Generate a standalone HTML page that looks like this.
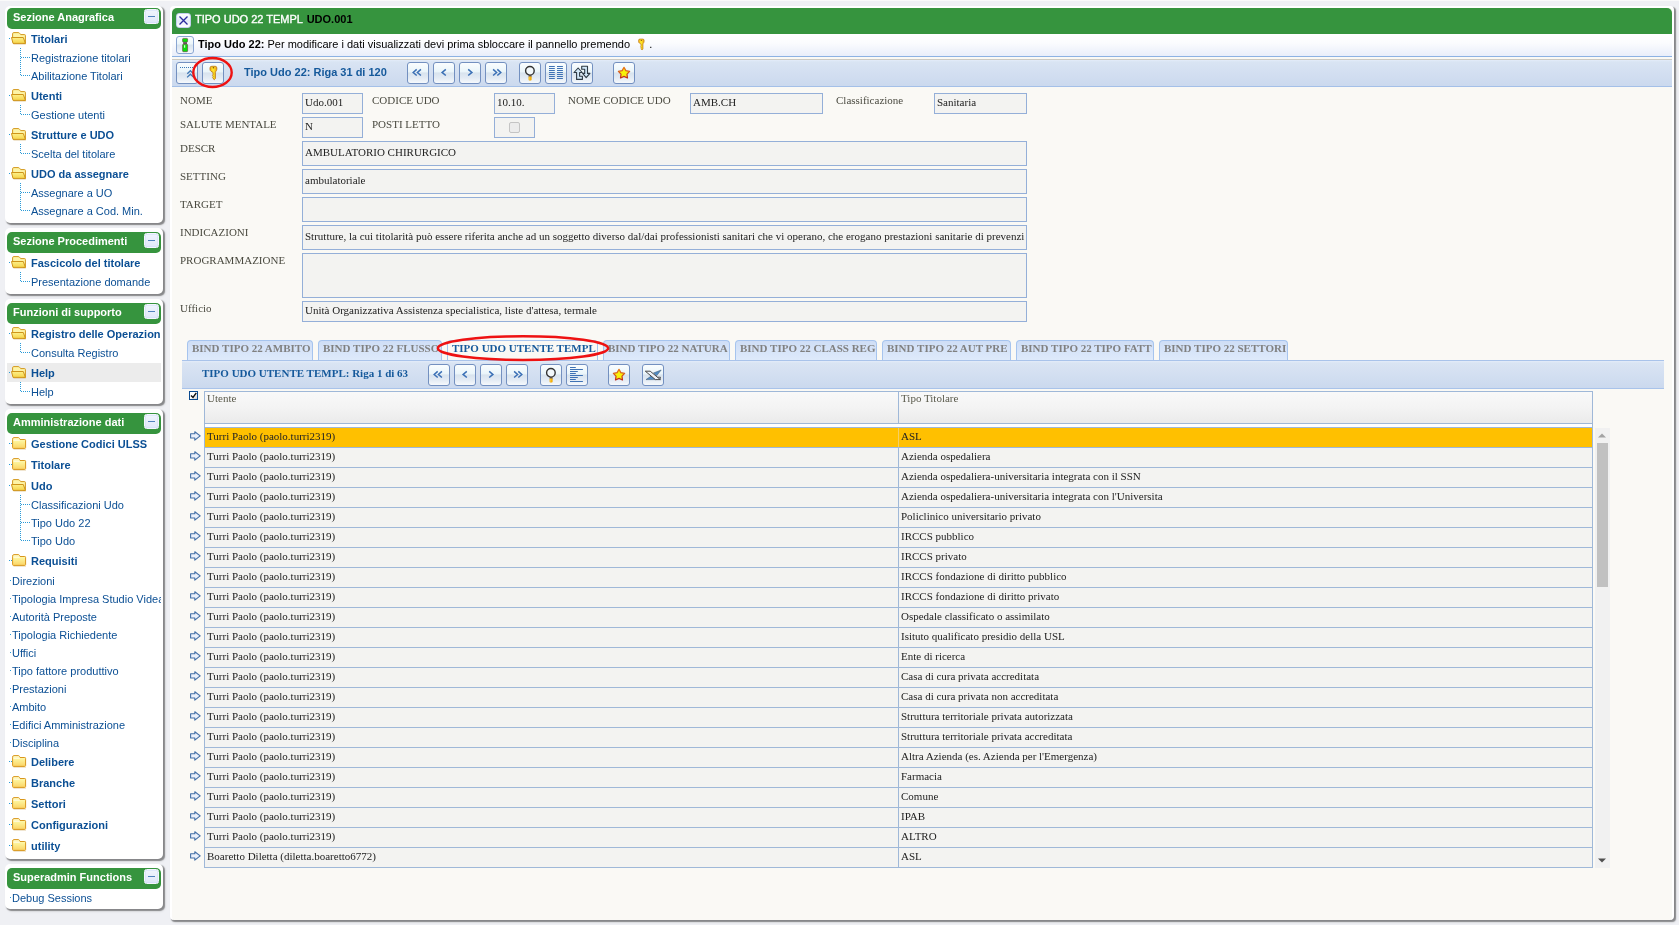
<!DOCTYPE html><html><head><meta charset="utf-8"><title>UI</title><style>
*{box-sizing:border-box;margin:0;padding:0}
html,body{width:1679px;height:925px;overflow:hidden}
body{background:#eff0f4;font-family:"Liberation Sans",sans-serif;font-size:11px;position:relative}
.abs{position:absolute}
.sp{position:absolute;left:5px;width:158px;background:#fff;border-radius:5px;box-shadow:1.500px 1.500px 1px rgba(0,0,0,.36),2px 2px 3px rgba(0,0,0,.14);padding:4px 2px 2px 2px}
.sh{height:21px;background:#36943e;border-radius:5px;color:#fff;font-weight:bold;font-size:11px;line-height:19px;padding-left:6px;position:relative}
.mb{position:absolute;right:2px;top:1px;width:15px;height:15px;border-radius:2.500px;background:linear-gradient(#f0f5fd,#dfe8f9);border:1px solid #f4f6ff;box-shadow:inset 0 0 0 .5px #d0dcfb}
.mb i{position:absolute;left:3px;top:6px;width:7px;height:1px;background:#4f81bd}
.fr{height:21px;position:relative;white-space:nowrap;overflow:hidden}
.fr b{position:absolute;left:24px;top:0;line-height:21px;color:#0b4f94;font-size:11px}
.fr svg{position:absolute;left:4px;top:3px}
.fr svg.c{left:5px}
.lr{height:18px;position:relative;white-space:nowrap}
.lr span{max-width:131px;overflow:hidden}
.lr span{position:absolute;left:24px;top:-1px;line-height:18px;color:#0b4f94;font-size:11px}
.lr.t span{left:5px;top:0;max-width:149px}
.dot{position:absolute;width:1px;height:1px;background:#2b9bd8}
.hl{background:linear-gradient(#ececec,#ececec) no-repeat;background-size:100% 19px}

.mp{position:absolute;left:170px;top:6px;width:1504px;height:914px;background:#faf9f5;border-radius:4px;box-shadow:1.500px 1.500px 1px rgba(0,0,0,.36),2px 2px 3px rgba(0,0,0,.14);border:2px solid #fff;border-bottom-width:0;border-right-width:2px}
.gh{position:absolute;left:172px;top:8px;width:1500px;height:26px;background:#36943e;border-radius:5px 5px 0 0;color:#fff;font-size:11px}
.gh .t{position:absolute;left:23px;top:5px;line-height:13px;white-space:nowrap;-webkit-text-stroke:.35px #fff}
.gh .t b{color:#000;-webkit-text-stroke:0;margin-left:1px}
.cb{position:absolute;left:4px;top:5px;width:15px;height:15px;border-radius:3px;background:linear-gradient(#fff,#e4ebf8 55%,#fff);border:1px solid #c5d0ee}
.ib{position:absolute;left:172px;top:34px;width:1500px;height:23px;background:linear-gradient(#ffffff,#fbfcfe 40%,#e9eefa);border-bottom:1px solid #8db2e3}
.ib .t{position:absolute;left:26px;top:4px;line-height:13px;font-size:11px;color:#000;white-space:nowrap}
.sep{position:absolute;left:172px;top:59px;width:1500px;height:1px;background:#cbcac4}
.tb{position:absolute;left:172px;top:60px;width:1500px;height:27px;background:linear-gradient(#e3ecf9,#d9e4f3 8%,#d3dff1 50%,#cbd9ee);border-bottom:1px solid #a4c0e8}
.btn{position:absolute;width:22px;height:22px;border:1px solid #7390c0;border-radius:3px;background:linear-gradient(#fafdfe,#eaf5fa 44%,#d8e3ee 50%,#e3ebf4 75%,#f6f9fc)}
.btn svg{position:absolute;left:0;top:0}
.tt{position:absolute;font-weight:bold;color:#15599b;font-size:11px;line-height:13px;white-space:nowrap}
.lb{position:absolute;font-family:"Liberation Serif",serif;font-size:11px;line-height:13px;color:#4a4a40;white-space:nowrap}
.in{position:absolute;font-family:"Liberation Serif",serif;font-size:11px;color:#222;background:#f3f3f1;border:1px solid #94afd8;white-space:nowrap;overflow:hidden;padding-left:2px}

.tab{position:absolute;top:340px;height:20px;background:linear-gradient(#cfdef6,#deeafb);border:1px solid #a6c4ee;border-bottom:none;border-radius:4px 4px 0 0;font-family:"Liberation Serif",serif;font-weight:bold;font-size:11px;color:#808080;line-height:13px;padding:1px 0 0 4px;white-space:nowrap;overflow:hidden}
.tab.on{background:#faf9f5;color:#15599b;height:21px}
.stb{position:absolute;left:182px;top:360px;width:1482px;height:29px;background:linear-gradient(#e3ecf9,#d9e4f3 8%,#d3dff1 50%,#cbd9ee);border-top:1px solid #a9c3ea;border-bottom:1px solid #a9c3ea}
.stt{position:absolute;left:202px;top:367px;font-family:"Liberation Serif",serif;font-weight:bold;font-size:11px;line-height:13px;color:#15599b;white-space:nowrap}
.th{position:absolute;top:391px;height:33px;border:1px solid #9fb8d8;background:linear-gradient(#f9f9f9,#f4f4f4 45%,#ebebeb);font-family:"Liberation Serif",serif;font-size:11px;line-height:13px;color:#5a5a4c;padding:0 0 0 2px}
.gr{position:absolute;left:204px;width:1389px;height:20px;border-left:1px solid #9fb8d8;border-right:1px solid #9fb8d8;border-bottom:1px solid #9fb8d8;background:#f3f3f1;font-family:"Liberation Serif",serif;font-size:11px;line-height:13px;color:#222}
.gr.sel{background:#ffc000}
.gr span{position:absolute;top:2px;white-space:nowrap}
.gr i{position:absolute;left:693px;top:0;width:1px;height:19px;background:#9fb8d8}
.gr.sel i{background:#f6cf63}
.arw{position:absolute;left:189.500px}
</style></head><body><div id="root" style="position:absolute;left:0;top:0;width:1679px;height:925px;will-change:transform"><div class="abs" style="left:0;top:0;width:1679px;height:1px;background:#fafafa"></div>
<div class="sp" style="top:6px;padding-top:2px"><div class="sh">Sezione Anagrafica<span class="mb"><i></i></span></div><div class="fr"><i class="dot" style="left:2px;top:9px"></i><svg width="16" height="13" viewBox="0 0 16 13"><defs><linearGradient id="fo" x1="0" y1="0" x2="0" y2="1"><stop offset="0" stop-color="#fdf08a"/><stop offset="1" stop-color="#f6d44a"/></linearGradient></defs><path d="M1.6 6V1.800Q1.600 .6 2.800 .6H7.200Q8.300 .6 8.900 1.600L9.700 2.600H13.600Q14.400 2.600 14.400 3.400V11.400H12" fill="#fdf4a6" stroke="#d3981c"/><path d="M.5 5.500H12.300L14.400 11.400H2Z" fill="url(#fo)" stroke="#cf941a" stroke-linejoin="round"/><path d="M2.500 12.300H14.800" stroke="#c9a25a" stroke-width=".6" opacity=".6"/></svg><b>Titolari</b></div><div class="lr"><i class="dot" style="left:13px;top:-2px"></i><i class="dot" style="left:13px;top:0px"></i><i class="dot" style="left:13px;top:2px"></i><i class="dot" style="left:13px;top:4px"></i><i class="dot" style="left:13px;top:6px"></i><i class="dot" style="left:13px;top:8px"></i><i class="dot" style="left:13px;top:10px"></i><i class="dot" style="left:13px;top:12px"></i><i class="dot" style="left:13px;top:14px"></i><i class="dot" style="left:13px;top:16px"></i><i class="dot" style="left:14px;top:7px"></i><i class="dot" style="left:16px;top:7px"></i><i class="dot" style="left:18px;top:7px"></i><i class="dot" style="left:20px;top:7px"></i><i class="dot" style="left:22px;top:7px"></i><span>Registrazione titolari</span></div><div class="lr"><i class="dot" style="left:13px;top:-2px"></i><i class="dot" style="left:13px;top:0px"></i><i class="dot" style="left:13px;top:2px"></i><i class="dot" style="left:13px;top:4px"></i><i class="dot" style="left:13px;top:6px"></i><i class="dot" style="left:14px;top:7px"></i><i class="dot" style="left:16px;top:7px"></i><i class="dot" style="left:18px;top:7px"></i><i class="dot" style="left:20px;top:7px"></i><i class="dot" style="left:22px;top:7px"></i><span>Abilitazione Titolari</span></div><div class="fr"><i class="dot" style="left:2px;top:9px"></i><svg width="16" height="13" viewBox="0 0 16 13"><defs><linearGradient id="fo" x1="0" y1="0" x2="0" y2="1"><stop offset="0" stop-color="#fdf08a"/><stop offset="1" stop-color="#f6d44a"/></linearGradient></defs><path d="M1.6 6V1.800Q1.600 .6 2.800 .6H7.200Q8.300 .6 8.900 1.600L9.700 2.600H13.600Q14.400 2.600 14.400 3.400V11.400H12" fill="#fdf4a6" stroke="#d3981c"/><path d="M.5 5.500H12.300L14.400 11.400H2Z" fill="url(#fo)" stroke="#cf941a" stroke-linejoin="round"/><path d="M2.500 12.300H14.800" stroke="#c9a25a" stroke-width=".6" opacity=".6"/></svg><b>Utenti</b></div><div class="lr"><i class="dot" style="left:13px;top:-2px"></i><i class="dot" style="left:13px;top:0px"></i><i class="dot" style="left:13px;top:2px"></i><i class="dot" style="left:13px;top:4px"></i><i class="dot" style="left:13px;top:6px"></i><i class="dot" style="left:14px;top:7px"></i><i class="dot" style="left:16px;top:7px"></i><i class="dot" style="left:18px;top:7px"></i><i class="dot" style="left:20px;top:7px"></i><i class="dot" style="left:22px;top:7px"></i><span>Gestione utenti</span></div><div class="fr"><i class="dot" style="left:2px;top:9px"></i><svg width="16" height="13" viewBox="0 0 16 13"><defs><linearGradient id="fo" x1="0" y1="0" x2="0" y2="1"><stop offset="0" stop-color="#fdf08a"/><stop offset="1" stop-color="#f6d44a"/></linearGradient></defs><path d="M1.6 6V1.800Q1.600 .6 2.800 .6H7.200Q8.300 .6 8.900 1.600L9.700 2.600H13.600Q14.400 2.600 14.400 3.400V11.400H12" fill="#fdf4a6" stroke="#d3981c"/><path d="M.5 5.500H12.300L14.400 11.400H2Z" fill="url(#fo)" stroke="#cf941a" stroke-linejoin="round"/><path d="M2.500 12.300H14.800" stroke="#c9a25a" stroke-width=".6" opacity=".6"/></svg><b>Strutture e UDO</b></div><div class="lr"><i class="dot" style="left:13px;top:-2px"></i><i class="dot" style="left:13px;top:0px"></i><i class="dot" style="left:13px;top:2px"></i><i class="dot" style="left:13px;top:4px"></i><i class="dot" style="left:13px;top:6px"></i><i class="dot" style="left:14px;top:7px"></i><i class="dot" style="left:16px;top:7px"></i><i class="dot" style="left:18px;top:7px"></i><i class="dot" style="left:20px;top:7px"></i><i class="dot" style="left:22px;top:7px"></i><span>Scelta del titolare</span></div><div class="fr"><i class="dot" style="left:2px;top:9px"></i><svg width="16" height="13" viewBox="0 0 16 13"><defs><linearGradient id="fo" x1="0" y1="0" x2="0" y2="1"><stop offset="0" stop-color="#fdf08a"/><stop offset="1" stop-color="#f6d44a"/></linearGradient></defs><path d="M1.6 6V1.800Q1.600 .6 2.800 .6H7.200Q8.300 .6 8.900 1.600L9.700 2.600H13.600Q14.400 2.600 14.400 3.400V11.400H12" fill="#fdf4a6" stroke="#d3981c"/><path d="M.5 5.500H12.300L14.400 11.400H2Z" fill="url(#fo)" stroke="#cf941a" stroke-linejoin="round"/><path d="M2.500 12.300H14.800" stroke="#c9a25a" stroke-width=".6" opacity=".6"/></svg><b>UDO da assegnare</b></div><div class="lr"><i class="dot" style="left:13px;top:-2px"></i><i class="dot" style="left:13px;top:0px"></i><i class="dot" style="left:13px;top:2px"></i><i class="dot" style="left:13px;top:4px"></i><i class="dot" style="left:13px;top:6px"></i><i class="dot" style="left:13px;top:8px"></i><i class="dot" style="left:13px;top:10px"></i><i class="dot" style="left:13px;top:12px"></i><i class="dot" style="left:13px;top:14px"></i><i class="dot" style="left:13px;top:16px"></i><i class="dot" style="left:14px;top:7px"></i><i class="dot" style="left:16px;top:7px"></i><i class="dot" style="left:18px;top:7px"></i><i class="dot" style="left:20px;top:7px"></i><i class="dot" style="left:22px;top:7px"></i><span>Assegnare a UO</span></div><div class="lr"><i class="dot" style="left:13px;top:-2px"></i><i class="dot" style="left:13px;top:0px"></i><i class="dot" style="left:13px;top:2px"></i><i class="dot" style="left:13px;top:4px"></i><i class="dot" style="left:13px;top:6px"></i><i class="dot" style="left:14px;top:7px"></i><i class="dot" style="left:16px;top:7px"></i><i class="dot" style="left:18px;top:7px"></i><i class="dot" style="left:20px;top:7px"></i><i class="dot" style="left:22px;top:7px"></i><span>Assegnare a Cod. Min.</span></div></div>
<div class="sp" style="top:228px"><div class="sh">Sezione Procedimenti<span class="mb"><i></i></span></div><div class="fr"><i class="dot" style="left:2px;top:9px"></i><svg width="16" height="13" viewBox="0 0 16 13"><defs><linearGradient id="fo" x1="0" y1="0" x2="0" y2="1"><stop offset="0" stop-color="#fdf08a"/><stop offset="1" stop-color="#f6d44a"/></linearGradient></defs><path d="M1.6 6V1.800Q1.600 .6 2.800 .6H7.200Q8.300 .6 8.900 1.600L9.700 2.600H13.600Q14.400 2.600 14.400 3.400V11.400H12" fill="#fdf4a6" stroke="#d3981c"/><path d="M.5 5.500H12.300L14.400 11.400H2Z" fill="url(#fo)" stroke="#cf941a" stroke-linejoin="round"/><path d="M2.500 12.300H14.800" stroke="#c9a25a" stroke-width=".6" opacity=".6"/></svg><b>Fascicolo del titolare</b></div><div class="lr"><i class="dot" style="left:13px;top:-2px"></i><i class="dot" style="left:13px;top:0px"></i><i class="dot" style="left:13px;top:2px"></i><i class="dot" style="left:13px;top:4px"></i><i class="dot" style="left:13px;top:6px"></i><i class="dot" style="left:14px;top:7px"></i><i class="dot" style="left:16px;top:7px"></i><i class="dot" style="left:18px;top:7px"></i><i class="dot" style="left:20px;top:7px"></i><i class="dot" style="left:22px;top:7px"></i><span>Presentazione domande</span></div></div>
<div class="sp" style="top:299px"><div class="sh">Funzioni di supporto<span class="mb"><i></i></span></div><div class="fr"><i class="dot" style="left:2px;top:9px"></i><svg width="16" height="13" viewBox="0 0 16 13"><defs><linearGradient id="fo" x1="0" y1="0" x2="0" y2="1"><stop offset="0" stop-color="#fdf08a"/><stop offset="1" stop-color="#f6d44a"/></linearGradient></defs><path d="M1.6 6V1.800Q1.600 .6 2.800 .6H7.200Q8.300 .6 8.900 1.600L9.700 2.600H13.600Q14.400 2.600 14.400 3.400V11.400H12" fill="#fdf4a6" stroke="#d3981c"/><path d="M.5 5.500H12.300L14.400 11.400H2Z" fill="url(#fo)" stroke="#cf941a" stroke-linejoin="round"/><path d="M2.500 12.300H14.800" stroke="#c9a25a" stroke-width=".6" opacity=".6"/></svg><b>Registro delle Operazioni</b></div><div class="lr"><i class="dot" style="left:13px;top:-2px"></i><i class="dot" style="left:13px;top:0px"></i><i class="dot" style="left:13px;top:2px"></i><i class="dot" style="left:13px;top:4px"></i><i class="dot" style="left:13px;top:6px"></i><i class="dot" style="left:14px;top:7px"></i><i class="dot" style="left:16px;top:7px"></i><i class="dot" style="left:18px;top:7px"></i><i class="dot" style="left:20px;top:7px"></i><i class="dot" style="left:22px;top:7px"></i><span>Consulta Registro</span></div><div class="fr hl"><i class="dot" style="left:2px;top:9px"></i><svg width="16" height="13" viewBox="0 0 16 13"><defs><linearGradient id="fo" x1="0" y1="0" x2="0" y2="1"><stop offset="0" stop-color="#fdf08a"/><stop offset="1" stop-color="#f6d44a"/></linearGradient></defs><path d="M1.6 6V1.800Q1.600 .6 2.800 .6H7.200Q8.300 .6 8.900 1.600L9.700 2.600H13.600Q14.400 2.600 14.400 3.400V11.400H12" fill="#fdf4a6" stroke="#d3981c"/><path d="M.5 5.500H12.300L14.400 11.400H2Z" fill="url(#fo)" stroke="#cf941a" stroke-linejoin="round"/><path d="M2.500 12.300H14.800" stroke="#c9a25a" stroke-width=".6" opacity=".6"/></svg><b>Help</b></div><div class="lr"><i class="dot" style="left:13px;top:-2px"></i><i class="dot" style="left:13px;top:0px"></i><i class="dot" style="left:13px;top:2px"></i><i class="dot" style="left:13px;top:4px"></i><i class="dot" style="left:13px;top:6px"></i><i class="dot" style="left:14px;top:7px"></i><i class="dot" style="left:16px;top:7px"></i><i class="dot" style="left:18px;top:7px"></i><i class="dot" style="left:20px;top:7px"></i><i class="dot" style="left:22px;top:7px"></i><span>Help</span></div></div>
<div class="sp" style="top:409px"><div class="sh">Amministrazione dati<span class="mb"><i></i></span></div><div class="fr"><i class="dot" style="left:2px;top:9px"></i><i class="dot" style="left:4px;top:9px"></i><svg class="c" width="16" height="13" viewBox="0 0 16 13"><defs><linearGradient id="fc" x1="0" y1="0" x2="0" y2="1"><stop offset="0" stop-color="#fffcd0"/><stop offset=".35" stop-color="#fdf39a"/><stop offset="1" stop-color="#fbd364"/></linearGradient></defs><path d="M.6 2.200Q.6 .6 1.800 .6H6.400Q7.200 .6 7.600 1.600L8 2.500H12.800Q13.600 2.500 13.600 3.300V10.600Q13.600 11.400 12.800 11.400H1.400Q.6 11.400 .6 10.600Z" fill="url(#fc)" stroke="#d9971c"/><path d="M1.500 3.300H7.800" stroke="#fffbe6" stroke-width=".9"/><path d="M1.500 12.300H14" stroke="#c9a25a" stroke-width=".6" opacity=".6"/></svg><b>Gestione Codici ULSS</b></div><div class="fr"><i class="dot" style="left:2px;top:9px"></i><i class="dot" style="left:4px;top:9px"></i><svg class="c" width="16" height="13" viewBox="0 0 16 13"><defs><linearGradient id="fc" x1="0" y1="0" x2="0" y2="1"><stop offset="0" stop-color="#fffcd0"/><stop offset=".35" stop-color="#fdf39a"/><stop offset="1" stop-color="#fbd364"/></linearGradient></defs><path d="M.6 2.200Q.6 .6 1.800 .6H6.400Q7.200 .6 7.600 1.600L8 2.500H12.800Q13.600 2.500 13.600 3.300V10.600Q13.600 11.400 12.800 11.400H1.400Q.6 11.400 .6 10.600Z" fill="url(#fc)" stroke="#d9971c"/><path d="M1.500 3.300H7.800" stroke="#fffbe6" stroke-width=".9"/><path d="M1.500 12.300H14" stroke="#c9a25a" stroke-width=".6" opacity=".6"/></svg><b>Titolare</b></div><div class="fr"><i class="dot" style="left:2px;top:9px"></i><svg width="16" height="13" viewBox="0 0 16 13"><defs><linearGradient id="fo" x1="0" y1="0" x2="0" y2="1"><stop offset="0" stop-color="#fdf08a"/><stop offset="1" stop-color="#f6d44a"/></linearGradient></defs><path d="M1.6 6V1.800Q1.600 .6 2.800 .6H7.200Q8.300 .6 8.900 1.600L9.700 2.600H13.600Q14.400 2.600 14.400 3.400V11.400H12" fill="#fdf4a6" stroke="#d3981c"/><path d="M.5 5.500H12.300L14.400 11.400H2Z" fill="url(#fo)" stroke="#cf941a" stroke-linejoin="round"/><path d="M2.500 12.300H14.800" stroke="#c9a25a" stroke-width=".6" opacity=".6"/></svg><b>Udo</b></div><div class="lr"><i class="dot" style="left:13px;top:-2px"></i><i class="dot" style="left:13px;top:0px"></i><i class="dot" style="left:13px;top:2px"></i><i class="dot" style="left:13px;top:4px"></i><i class="dot" style="left:13px;top:6px"></i><i class="dot" style="left:13px;top:8px"></i><i class="dot" style="left:13px;top:10px"></i><i class="dot" style="left:13px;top:12px"></i><i class="dot" style="left:13px;top:14px"></i><i class="dot" style="left:13px;top:16px"></i><i class="dot" style="left:14px;top:7px"></i><i class="dot" style="left:16px;top:7px"></i><i class="dot" style="left:18px;top:7px"></i><i class="dot" style="left:20px;top:7px"></i><i class="dot" style="left:22px;top:7px"></i><span>Classificazioni Udo</span></div><div class="lr"><i class="dot" style="left:13px;top:-2px"></i><i class="dot" style="left:13px;top:0px"></i><i class="dot" style="left:13px;top:2px"></i><i class="dot" style="left:13px;top:4px"></i><i class="dot" style="left:13px;top:6px"></i><i class="dot" style="left:13px;top:8px"></i><i class="dot" style="left:13px;top:10px"></i><i class="dot" style="left:13px;top:12px"></i><i class="dot" style="left:13px;top:14px"></i><i class="dot" style="left:13px;top:16px"></i><i class="dot" style="left:14px;top:7px"></i><i class="dot" style="left:16px;top:7px"></i><i class="dot" style="left:18px;top:7px"></i><i class="dot" style="left:20px;top:7px"></i><i class="dot" style="left:22px;top:7px"></i><span>Tipo Udo 22</span></div><div class="lr"><i class="dot" style="left:13px;top:-2px"></i><i class="dot" style="left:13px;top:0px"></i><i class="dot" style="left:13px;top:2px"></i><i class="dot" style="left:13px;top:4px"></i><i class="dot" style="left:13px;top:6px"></i><i class="dot" style="left:14px;top:7px"></i><i class="dot" style="left:16px;top:7px"></i><i class="dot" style="left:18px;top:7px"></i><i class="dot" style="left:20px;top:7px"></i><i class="dot" style="left:22px;top:7px"></i><span>Tipo Udo</span></div><div class="fr"><i class="dot" style="left:2px;top:9px"></i><i class="dot" style="left:4px;top:9px"></i><svg class="c" width="16" height="13" viewBox="0 0 16 13"><defs><linearGradient id="fc" x1="0" y1="0" x2="0" y2="1"><stop offset="0" stop-color="#fffcd0"/><stop offset=".35" stop-color="#fdf39a"/><stop offset="1" stop-color="#fbd364"/></linearGradient></defs><path d="M.6 2.200Q.6 .6 1.800 .6H6.400Q7.200 .6 7.600 1.600L8 2.500H12.800Q13.600 2.500 13.600 3.300V10.600Q13.600 11.400 12.800 11.400H1.400Q.6 11.400 .6 10.600Z" fill="url(#fc)" stroke="#d9971c"/><path d="M1.500 3.300H7.800" stroke="#fffbe6" stroke-width=".9"/><path d="M1.500 12.300H14" stroke="#c9a25a" stroke-width=".6" opacity=".6"/></svg><b>Requisiti</b></div><div class="lr t"><i class="dot" style="left:3px;top:8px"></i><span>Direzioni</span></div><div class="lr t"><i class="dot" style="left:3px;top:8px"></i><span>Tipologia Impresa Studio Videat</span></div><div class="lr t"><i class="dot" style="left:3px;top:8px"></i><span>Autorità Preposte</span></div><div class="lr t"><i class="dot" style="left:3px;top:8px"></i><span>Tipologia Richiedente</span></div><div class="lr t"><i class="dot" style="left:3px;top:8px"></i><span>Uffici</span></div><div class="lr t"><i class="dot" style="left:3px;top:8px"></i><span>Tipo fattore produttivo</span></div><div class="lr t"><i class="dot" style="left:3px;top:8px"></i><span>Prestazioni</span></div><div class="lr t"><i class="dot" style="left:3px;top:8px"></i><span>Ambito</span></div><div class="lr t"><i class="dot" style="left:3px;top:8px"></i><span>Edifici Amministrazione</span></div><div class="lr t"><i class="dot" style="left:3px;top:8px"></i><span>Disciplina</span></div><div class="fr"><i class="dot" style="left:2px;top:9px"></i><i class="dot" style="left:4px;top:9px"></i><svg class="c" width="16" height="13" viewBox="0 0 16 13"><defs><linearGradient id="fc" x1="0" y1="0" x2="0" y2="1"><stop offset="0" stop-color="#fffcd0"/><stop offset=".35" stop-color="#fdf39a"/><stop offset="1" stop-color="#fbd364"/></linearGradient></defs><path d="M.6 2.200Q.6 .6 1.800 .6H6.400Q7.200 .6 7.600 1.600L8 2.500H12.800Q13.600 2.500 13.600 3.300V10.600Q13.600 11.400 12.800 11.400H1.400Q.6 11.400 .6 10.600Z" fill="url(#fc)" stroke="#d9971c"/><path d="M1.500 3.300H7.800" stroke="#fffbe6" stroke-width=".9"/><path d="M1.500 12.300H14" stroke="#c9a25a" stroke-width=".6" opacity=".6"/></svg><b>Delibere</b></div><div class="fr"><i class="dot" style="left:2px;top:9px"></i><i class="dot" style="left:4px;top:9px"></i><svg class="c" width="16" height="13" viewBox="0 0 16 13"><defs><linearGradient id="fc" x1="0" y1="0" x2="0" y2="1"><stop offset="0" stop-color="#fffcd0"/><stop offset=".35" stop-color="#fdf39a"/><stop offset="1" stop-color="#fbd364"/></linearGradient></defs><path d="M.6 2.200Q.6 .6 1.800 .6H6.400Q7.200 .6 7.600 1.600L8 2.500H12.800Q13.600 2.500 13.600 3.300V10.600Q13.600 11.400 12.800 11.400H1.400Q.6 11.400 .6 10.600Z" fill="url(#fc)" stroke="#d9971c"/><path d="M1.500 3.300H7.800" stroke="#fffbe6" stroke-width=".9"/><path d="M1.500 12.300H14" stroke="#c9a25a" stroke-width=".6" opacity=".6"/></svg><b>Branche</b></div><div class="fr"><i class="dot" style="left:2px;top:9px"></i><i class="dot" style="left:4px;top:9px"></i><svg class="c" width="16" height="13" viewBox="0 0 16 13"><defs><linearGradient id="fc" x1="0" y1="0" x2="0" y2="1"><stop offset="0" stop-color="#fffcd0"/><stop offset=".35" stop-color="#fdf39a"/><stop offset="1" stop-color="#fbd364"/></linearGradient></defs><path d="M.6 2.200Q.6 .6 1.800 .6H6.400Q7.200 .6 7.600 1.600L8 2.500H12.800Q13.600 2.500 13.600 3.300V10.600Q13.600 11.400 12.800 11.400H1.400Q.6 11.400 .6 10.600Z" fill="url(#fc)" stroke="#d9971c"/><path d="M1.500 3.300H7.800" stroke="#fffbe6" stroke-width=".9"/><path d="M1.500 12.300H14" stroke="#c9a25a" stroke-width=".6" opacity=".6"/></svg><b>Settori</b></div><div class="fr"><i class="dot" style="left:2px;top:9px"></i><i class="dot" style="left:4px;top:9px"></i><svg class="c" width="16" height="13" viewBox="0 0 16 13"><defs><linearGradient id="fc" x1="0" y1="0" x2="0" y2="1"><stop offset="0" stop-color="#fffcd0"/><stop offset=".35" stop-color="#fdf39a"/><stop offset="1" stop-color="#fbd364"/></linearGradient></defs><path d="M.6 2.200Q.6 .6 1.800 .6H6.400Q7.200 .6 7.600 1.600L8 2.500H12.800Q13.600 2.500 13.600 3.300V10.600Q13.600 11.400 12.800 11.400H1.400Q.6 11.400 .6 10.600Z" fill="url(#fc)" stroke="#d9971c"/><path d="M1.500 3.300H7.800" stroke="#fffbe6" stroke-width=".9"/><path d="M1.500 12.300H14" stroke="#c9a25a" stroke-width=".6" opacity=".6"/></svg><b>Configurazioni</b></div><div class="fr"><i class="dot" style="left:2px;top:9px"></i><i class="dot" style="left:4px;top:9px"></i><svg class="c" width="16" height="13" viewBox="0 0 16 13"><defs><linearGradient id="fc" x1="0" y1="0" x2="0" y2="1"><stop offset="0" stop-color="#fffcd0"/><stop offset=".35" stop-color="#fdf39a"/><stop offset="1" stop-color="#fbd364"/></linearGradient></defs><path d="M.6 2.200Q.6 .6 1.800 .6H6.400Q7.200 .6 7.600 1.600L8 2.500H12.800Q13.600 2.500 13.600 3.300V10.600Q13.600 11.400 12.800 11.400H1.400Q.6 11.400 .6 10.600Z" fill="url(#fc)" stroke="#d9971c"/><path d="M1.500 3.300H7.800" stroke="#fffbe6" stroke-width=".9"/><path d="M1.500 12.300H14" stroke="#c9a25a" stroke-width=".6" opacity=".6"/></svg><b>utility</b></div></div>
<div class="sp" style="top:864px"><div class="sh">Superadmin Functions<span class="mb"><i></i></span></div><div class="lr t"><i class="dot" style="left:3px;top:8px"></i><span>Debug Sessions</span></div></div>
<div class="mp"></div>
<div class="gh"><div class="cb"><svg width="13" height="13" viewBox="0 0 13 13" style="position:absolute;left:0;top:0"><path d="M2.500 2.500L10.500 10.500M10.500 2.500L2.500 10.500" stroke="#2b2b9e" stroke-width="1.300"/></svg></div><div class="t">TIPO UDO 22 TEMPL <b>UDO.001</b></div></div>
<div class="ib"><div class="btn" style="left:4px;top:2px;width:18px;height:18px;border-color:#8aa6d2"><svg width="16" height="16" viewBox="0 0 16 16"><rect x="5.600" y="1.400" width="5" height="3.700" rx=".8" fill="#0bdc0b" stroke="#6a3a3a" stroke-width=".6"/><rect x="6.200" y="5.100" width="3.800" height="2.100" fill="#6a5262"/><rect x="5.600" y="7.200" width="5" height="7.500" rx=".8" fill="#0bdc0b" stroke="#6a3a3a" stroke-width=".6"/><rect x="7.100" y="8.200" width="1.100" height="2.500" fill="#e6ffe6"/></svg></div><div class="t"><b>Tipo Udo 22:</b> Per modificare i dati visualizzati devi prima sbloccare il pannello premendo <svg width="10" height="13" viewBox="5 2 10 16" style="vertical-align:-2.700px;margin:0 0 0 3px"><defs><linearGradient id="kg2" x1="0" y1="0" x2="1" y2="0"><stop offset="0" stop-color="#f3a71a"/><stop offset=".45" stop-color="#fff02a"/><stop offset="1" stop-color="#f0a218"/></linearGradient></defs><path d="M8.800 3.300H12.200Q13.800 3.300 13.800 4.900V6.300Q13.800 7.500 12.900 8.300L12.400 9.400V15.600L11.300 16.700L10.300 15.900V15L9.500 14.400L10.200 13.600L9.500 12.800L10 12V9.400L8 8.300Q7 7.500 7 6.300V4.900Q7 3.300 8.800 3.300Z" fill="url(#kg2)" stroke="#b8720e" stroke-width=".8" stroke-linejoin="round"/><circle cx="10.400" cy="4.800" r=".8" fill="#8a4a0c"/></svg> .</div></div>
<div class="sep"></div>
<div class="tb"></div>
<div class="btn" style="left:176px;top:62px"><svg width="20" height="20" viewBox="0 0 20 20"><g fill="#3b78b8"><rect x="3" y="4" width="1" height="1"/><rect x="5" y="4" width="1" height="1"/><rect x="7" y="4" width="1" height="1"/><rect x="9" y="4" width="1" height="1"/><rect x="11" y="4" width="1" height="1"/><rect x="13" y="4" width="1" height="1"/><rect x="15" y="4" width="1" height="1"/><rect x="17" y="4" width="1" height="1"/></g><path d="M10.300 10.800L13.400 7.700L16.500 10.800M10.100 14.400L13.400 11.200L16.700 14.400" fill="none" stroke="#3f78b5" stroke-width="1.300"/></svg></div>
<div class="btn" style="left:202px;top:62px"><svg width="20" height="20" viewBox="0 0 20 20"><defs><linearGradient id="kg" x1="0" y1="0" x2="1" y2="0"><stop offset="0" stop-color="#f3a71a"/><stop offset=".45" stop-color="#fff02a"/><stop offset="1" stop-color="#f0a218"/></linearGradient></defs><path d="M8.800 3.300H12.200Q13.800 3.300 13.800 4.900V6.300Q13.800 7.500 12.900 8.300L12.400 9.400V15.600L11.300 16.700L10.300 15.900V15L9.500 14.400L10.200 13.600L9.500 12.800L10 12V9.400L8 8.300Q7 7.500 7 6.300V4.900Q7 3.300 8.800 3.300Z" fill="url(#kg)" stroke="#b8720e" stroke-width=".8" stroke-linejoin="round"/><circle cx="10.400" cy="4.800" r=".8" fill="#8a4a0c"/></svg></div>
<div class="tt" style="left:244px;top:66px">Tipo Udo 22: Riga 31 di 120</div>
<div class="btn" style="left:407px;top:62px"><svg width="20" height="20" viewBox="0 0 20 20"><path d="M8.700 6.400L5.200 9.450L8.700 12.500M12.900 6.400L9.400 9.450L12.900 12.500" fill="none" stroke="#3a6fb5" stroke-width="1.500"/></svg></div>
<div class="btn" style="left:433px;top:62px"><svg width="20" height="20" viewBox="0 0 20 20"><path d="M11.800 6.400L8.100 9.450L11.800 12.500" fill="none" stroke="#3a6fb5" stroke-width="1.500"/></svg></div>
<div class="btn" style="left:459px;top:62px"><svg width="20" height="20" viewBox="0 0 20 20"><path d="M8.200 6.400L11.900 9.450L8.200 12.500" fill="none" stroke="#3a6fb5" stroke-width="1.500"/></svg></div>
<div class="btn" style="left:485px;top:62px"><svg width="20" height="20" viewBox="0 0 20 20"><path d="M7.100 6.400L10.600 9.450L7.100 12.500M11.300 6.400L14.800 9.450L11.300 12.500" fill="none" stroke="#3a6fb5" stroke-width="1.500"/></svg></div>
<div class="btn" style="left:519px;top:62px"><svg width="20" height="20" viewBox="0 0 20 20"><circle cx="9.900" cy="7.800" r="4.300" fill="#f2f8fb" stroke="#333" stroke-width="1.400"/><rect x="8.600" y="12.300" width="3" height="1.400" fill="#4a3c34"/><rect x="8.600" y="13.500" width="3" height="4" rx=".8" fill="#f2a900"/><rect x="9.300" y="13.800" width=".9" height="3" fill="#fbd24a"/></svg></div>
<div class="btn" style="left:545px;top:62px"><svg width="20" height="20" viewBox="0 0 20 20"><g stroke="#3f72b5" stroke-width="1"><path d="M3 3.5H8.800M11 3.5H16.900"/><path d="M3 5.5H8.800M11 5.5H16.900"/><path d="M3 7.5H8.800M11 7.5H16.900"/><path d="M3 9.5H8.800M11 9.5H16.900"/><path d="M3 11.5H8.800M11 11.5H16.900"/><path d="M3 13.5H8.800M11 13.5H16.900"/><path d="M3 15.5H8.800M11 15.5H16.900"/></g></svg></div>
<div class="btn" style="left:571px;top:62px"><svg width="20" height="20" viewBox="0 0 20 20"><g fill="#d2e8f8" stroke="#2e3a44" stroke-width="1.100" stroke-linejoin="round"><path d="M6.100 5L10.200 9.500H7.600V13.200H10.400V16.400H4.600V9.500H2Z"/><path d="M9.700 3.300H15.500V10.400H17.900L14.200 14.700L10.600 10.400H12.700V6.300H9.700Z"/></g></svg></div>
<div class="btn" style="left:613px;top:62px"><svg width="20" height="20" viewBox="0 0 20 20"><defs><linearGradient id="sg" x1="0" y1="0" x2="0" y2="1"><stop offset="0" stop-color="#ea7a1c"/><stop offset="1" stop-color="#bf2a1a"/></linearGradient></defs><path d="M10.00 4.30L11.85 7.65L15.61 8.38L13.00 11.17L13.47 14.97L10.00 13.35L6.53 14.97L7.00 11.17L4.39 8.38L8.15 7.65Z" fill="#f7f20a" stroke="url(#sg)" stroke-width="1.250" stroke-linejoin="round"/></svg></div>
<svg class="abs" style="left:185px;top:50px" width="56" height="46" viewBox="185 50 56 46"><ellipse cx="212.500" cy="72.500" rx="19.200" ry="14.500" fill="none" stroke="#ee1212" stroke-width="2.400"/></svg>
<div class="lb" style="left:180px;top:94px">NOME</div>
<div class="in" style="left:302px;top:93px;width:61px;height:21px;line-height:17px">Udo.001</div>
<div class="lb" style="left:372px;top:94px">CODICE UDO</div>
<div class="in" style="left:494px;top:93px;width:61px;height:21px;line-height:17px">10.10.</div>
<div class="lb" style="left:568px;top:94px">NOME CODICE UDO</div>
<div class="in" style="left:690px;top:93px;width:133px;height:21px;line-height:17px">AMB.CH</div>
<div class="lb" style="left:836px;top:94px">Classificazione</div>
<div class="in" style="left:934px;top:93px;width:93px;height:21px;line-height:17px">Sanitaria</div>
<div class="lb" style="left:180px;top:118px">SALUTE MENTALE</div>
<div class="in" style="left:302px;top:117px;width:61px;height:21px;line-height:17px">N</div>
<div class="lb" style="left:372px;top:118px">POSTI LETTO</div>
<div class="in" style="left:494px;top:117px;width:41px;height:21px;line-height:17px"><i style="position:absolute;left:14px;top:4px;width:11px;height:11px;border:1px solid #c4c4c4;border-radius:2px;background:#ececec"></i></div>
<div class="lb" style="left:180px;top:142px">DESCR</div>
<div class="in" style="left:302px;top:141px;width:725px;height:25px;line-height:21px">AMBULATORIO CHIRURGICO</div>
<div class="lb" style="left:180px;top:170px">SETTING</div>
<div class="in" style="left:302px;top:169px;width:725px;height:25px;line-height:21px">ambulatoriale</div>
<div class="lb" style="left:180px;top:198px">TARGET</div>
<div class="in" style="left:302px;top:197px;width:725px;height:25px;line-height:21px"></div>
<div class="lb" style="left:180px;top:226px">INDICAZIONI</div>
<div class="in" style="left:302px;top:225px;width:725px;height:25px;line-height:21px">Strutture, la cui titolarità può essere riferita anche ad un soggetto diverso dal/dai professionisti sanitari che vi operano, che erogano prestazioni sanitarie di prevenzi</div>
<div class="lb" style="left:180px;top:254px">PROGRAMMAZIONE</div>
<div class="in" style="left:302px;top:253px;width:725px;height:45px;line-height:41px"></div>
<div class="lb" style="left:180px;top:302px">Ufficio</div>
<div class="in" style="left:302px;top:301px;width:725px;height:21px;line-height:17px">Unità Organizzativa Assistenza specialistica, liste d'attesa, termale</div>
<div class="tab" style="left:187px;width:126px">BIND TIPO 22 AMBITO</div>
<div class="tab" style="left:318px;width:124px">BIND TIPO 22 FLUSSO</div>
<div class="tab on" style="left:447px;width:151px">TIPO UDO UTENTE TEMPL</div>
<div class="tab" style="left:603px;width:127px">BIND TIPO 22 NATURA</div>
<div class="tab" style="left:735px;width:142px">BIND TIPO 22 CLASS REG</div>
<div class="tab" style="left:882px;width:129px">BIND TIPO 22 AUT PRE</div>
<div class="tab" style="left:1016px;width:138px">BIND TIPO 22 TIPO FATT</div>
<div class="tab" style="left:1159px;width:129px">BIND TIPO 22 SETTORI</div>
<div class="stb"></div>
<div class="stt">TIPO UDO UTENTE TEMPL: Riga 1 di 63</div>
<div class="btn" style="left:428px;top:364px"><svg width="20" height="20" viewBox="0 0 20 20"><path d="M8.700 6.400L5.200 9.450L8.700 12.500M12.900 6.400L9.400 9.450L12.900 12.500" fill="none" stroke="#3a6fb5" stroke-width="1.500"/></svg></div>
<div class="btn" style="left:454px;top:364px"><svg width="20" height="20" viewBox="0 0 20 20"><path d="M11.800 6.400L8.100 9.450L11.800 12.500" fill="none" stroke="#3a6fb5" stroke-width="1.500"/></svg></div>
<div class="btn" style="left:480px;top:364px"><svg width="20" height="20" viewBox="0 0 20 20"><path d="M8.200 6.400L11.900 9.450L8.200 12.500" fill="none" stroke="#3a6fb5" stroke-width="1.500"/></svg></div>
<div class="btn" style="left:506px;top:364px"><svg width="20" height="20" viewBox="0 0 20 20"><path d="M7.100 6.400L10.600 9.450L7.100 12.500M11.300 6.400L14.800 9.450L11.300 12.500" fill="none" stroke="#3a6fb5" stroke-width="1.500"/></svg></div>
<div class="btn" style="left:540px;top:364px"><svg width="20" height="20" viewBox="0 0 20 20"><circle cx="9.900" cy="7.800" r="4.300" fill="#f2f8fb" stroke="#333" stroke-width="1.400"/><rect x="8.600" y="12.300" width="3" height="1.400" fill="#4a3c34"/><rect x="8.600" y="13.500" width="3" height="4" rx=".8" fill="#f2a900"/><rect x="9.300" y="13.800" width=".9" height="3" fill="#fbd24a"/></svg></div>
<div class="btn" style="left:566px;top:364px"><svg width="20" height="20" viewBox="0 0 20 20"><g stroke="#3f72b5" stroke-width="1"><path d="M3 2.5H8.8"/><path d="M3 4.5H15.9"/><path d="M3 6.5H10.8"/><path d="M3 8.5H8.8"/><path d="M3 10.5H15.9"/><path d="M3 12.5H10.8"/><path d="M3 14.5H8.8"/><path d="M3 16.5H15.9"/></g></svg></div>
<div class="btn" style="left:608px;top:364px"><svg width="20" height="20" viewBox="0 0 20 20"><defs><linearGradient id="sg" x1="0" y1="0" x2="0" y2="1"><stop offset="0" stop-color="#ea7a1c"/><stop offset="1" stop-color="#bf2a1a"/></linearGradient></defs><path d="M10.00 4.30L11.85 7.65L15.61 8.38L13.00 11.17L13.47 14.97L10.00 13.35L6.53 14.97L7.00 11.17L4.39 8.38L8.15 7.65Z" fill="#f7f20a" stroke="url(#sg)" stroke-width="1.250" stroke-linejoin="round"/></svg></div>
<div class="btn" style="left:642px;top:364px"><svg width="20" height="20" viewBox="0 0 20 20"><path d="M18.200 5L10.500 8L13.500 10.800Z" fill="#4f8cc4" stroke="#47627e" stroke-width=".6"/><path d="M3 14.600L9.800 10L12.600 14.600Z" fill="#4f8cc4" stroke="#47627e" stroke-width=".6"/><path d="M2.300 6.200H7.200L17.300 14.600H12.400Z" fill="#eef3f8" stroke="#4a4a4a" stroke-width="1" stroke-linejoin="round"/><path d="M14.500 12.200H17.500L16.800 15" fill="none" stroke="#4a4a4a" stroke-width=".9"/></svg></div>
<svg class="abs" style="left:430px;top:330px" width="190" height="38" viewBox="430 330 190 38"><ellipse cx="523" cy="348.150" rx="85.150" ry="11.900" fill="none" stroke="#ee1212" stroke-width="2.500"/></svg>
<div class="abs" style="left:189px;top:391px;width:9px;height:9px;border:1px solid #0a4a90;background:linear-gradient(135deg,#fff 50%,#d0d0d0)"><svg width="7" height="7" viewBox="0 0 7 7" style="position:absolute;left:0;top:0"><path d="M1 3.500L3 5.500L6.300 .8" fill="none" stroke="#111" stroke-width="1.400"/></svg></div>
<div class="th" style="left:204px;width:695px">Utente</div>
<div class="th" style="left:898px;width:695px">Tipo Titolare</div>
<div class="abs" style="left:204px;top:424px;width:1389px;height:4px;background:#fff;border-left:1px solid #9fb8d8;border-right:1px solid #9fb8d8"></div>
<div class="abs" style="left:204px;top:427px;width:1389px;height:1px;background:#9fb8d8"></div>
<div class="gr sel" style="top:428px"><span style="left:2px">Turri Paolo (paolo.turri2319)</span><i></i><span style="left:696px">ASL</span></div>
<svg class="arw" style="top:431.2px" width="11" height="10" viewBox="0 0 11 10"><path d="M.6 2.800H4.800V.7L10.200 4.900L4.800 9.100V7H.6Z" fill="#eaf0fb" stroke="#446fa6" stroke-width="1.100" stroke-linejoin="round"/></svg>
<div class="gr" style="top:448px"><span style="left:2px">Turri Paolo (paolo.turri2319)</span><i></i><span style="left:696px">Azienda ospedaliera</span></div>
<svg class="arw" style="top:451.2px" width="11" height="10" viewBox="0 0 11 10"><path d="M.6 2.800H4.800V.7L10.200 4.900L4.800 9.100V7H.6Z" fill="#eaf0fb" stroke="#446fa6" stroke-width="1.100" stroke-linejoin="round"/></svg>
<div class="gr" style="top:468px"><span style="left:2px">Turri Paolo (paolo.turri2319)</span><i></i><span style="left:696px">Azienda ospedaliera-universitaria integrata con il SSN</span></div>
<svg class="arw" style="top:471.2px" width="11" height="10" viewBox="0 0 11 10"><path d="M.6 2.800H4.800V.7L10.200 4.900L4.800 9.100V7H.6Z" fill="#eaf0fb" stroke="#446fa6" stroke-width="1.100" stroke-linejoin="round"/></svg>
<div class="gr" style="top:488px"><span style="left:2px">Turri Paolo (paolo.turri2319)</span><i></i><span style="left:696px">Azienda ospedaliera-universitaria integrata con l'Universita</span></div>
<svg class="arw" style="top:491.2px" width="11" height="10" viewBox="0 0 11 10"><path d="M.6 2.800H4.800V.7L10.200 4.900L4.800 9.100V7H.6Z" fill="#eaf0fb" stroke="#446fa6" stroke-width="1.100" stroke-linejoin="round"/></svg>
<div class="gr" style="top:508px"><span style="left:2px">Turri Paolo (paolo.turri2319)</span><i></i><span style="left:696px">Policlinico universitario privato</span></div>
<svg class="arw" style="top:511.2px" width="11" height="10" viewBox="0 0 11 10"><path d="M.6 2.800H4.800V.7L10.200 4.900L4.800 9.100V7H.6Z" fill="#eaf0fb" stroke="#446fa6" stroke-width="1.100" stroke-linejoin="round"/></svg>
<div class="gr" style="top:528px"><span style="left:2px">Turri Paolo (paolo.turri2319)</span><i></i><span style="left:696px">IRCCS pubblico</span></div>
<svg class="arw" style="top:531.2px" width="11" height="10" viewBox="0 0 11 10"><path d="M.6 2.800H4.800V.7L10.200 4.900L4.800 9.100V7H.6Z" fill="#eaf0fb" stroke="#446fa6" stroke-width="1.100" stroke-linejoin="round"/></svg>
<div class="gr" style="top:548px"><span style="left:2px">Turri Paolo (paolo.turri2319)</span><i></i><span style="left:696px">IRCCS privato</span></div>
<svg class="arw" style="top:551.2px" width="11" height="10" viewBox="0 0 11 10"><path d="M.6 2.800H4.800V.7L10.200 4.900L4.800 9.100V7H.6Z" fill="#eaf0fb" stroke="#446fa6" stroke-width="1.100" stroke-linejoin="round"/></svg>
<div class="gr" style="top:568px"><span style="left:2px">Turri Paolo (paolo.turri2319)</span><i></i><span style="left:696px">IRCCS fondazione di diritto pubblico</span></div>
<svg class="arw" style="top:571.2px" width="11" height="10" viewBox="0 0 11 10"><path d="M.6 2.800H4.800V.7L10.200 4.900L4.800 9.100V7H.6Z" fill="#eaf0fb" stroke="#446fa6" stroke-width="1.100" stroke-linejoin="round"/></svg>
<div class="gr" style="top:588px"><span style="left:2px">Turri Paolo (paolo.turri2319)</span><i></i><span style="left:696px">IRCCS fondazione di diritto privato</span></div>
<svg class="arw" style="top:591.2px" width="11" height="10" viewBox="0 0 11 10"><path d="M.6 2.800H4.800V.7L10.200 4.900L4.800 9.100V7H.6Z" fill="#eaf0fb" stroke="#446fa6" stroke-width="1.100" stroke-linejoin="round"/></svg>
<div class="gr" style="top:608px"><span style="left:2px">Turri Paolo (paolo.turri2319)</span><i></i><span style="left:696px">Ospedale classificato o assimilato</span></div>
<svg class="arw" style="top:611.2px" width="11" height="10" viewBox="0 0 11 10"><path d="M.6 2.800H4.800V.7L10.200 4.900L4.800 9.100V7H.6Z" fill="#eaf0fb" stroke="#446fa6" stroke-width="1.100" stroke-linejoin="round"/></svg>
<div class="gr" style="top:628px"><span style="left:2px">Turri Paolo (paolo.turri2319)</span><i></i><span style="left:696px">Isituto qualificato presidio della USL</span></div>
<svg class="arw" style="top:631.2px" width="11" height="10" viewBox="0 0 11 10"><path d="M.6 2.800H4.800V.7L10.200 4.900L4.800 9.100V7H.6Z" fill="#eaf0fb" stroke="#446fa6" stroke-width="1.100" stroke-linejoin="round"/></svg>
<div class="gr" style="top:648px"><span style="left:2px">Turri Paolo (paolo.turri2319)</span><i></i><span style="left:696px">Ente di ricerca</span></div>
<svg class="arw" style="top:651.2px" width="11" height="10" viewBox="0 0 11 10"><path d="M.6 2.800H4.800V.7L10.200 4.900L4.800 9.100V7H.6Z" fill="#eaf0fb" stroke="#446fa6" stroke-width="1.100" stroke-linejoin="round"/></svg>
<div class="gr" style="top:668px"><span style="left:2px">Turri Paolo (paolo.turri2319)</span><i></i><span style="left:696px">Casa di cura privata accreditata</span></div>
<svg class="arw" style="top:671.2px" width="11" height="10" viewBox="0 0 11 10"><path d="M.6 2.800H4.800V.7L10.200 4.900L4.800 9.100V7H.6Z" fill="#eaf0fb" stroke="#446fa6" stroke-width="1.100" stroke-linejoin="round"/></svg>
<div class="gr" style="top:688px"><span style="left:2px">Turri Paolo (paolo.turri2319)</span><i></i><span style="left:696px">Casa di cura privata non accreditata</span></div>
<svg class="arw" style="top:691.2px" width="11" height="10" viewBox="0 0 11 10"><path d="M.6 2.800H4.800V.7L10.200 4.900L4.800 9.100V7H.6Z" fill="#eaf0fb" stroke="#446fa6" stroke-width="1.100" stroke-linejoin="round"/></svg>
<div class="gr" style="top:708px"><span style="left:2px">Turri Paolo (paolo.turri2319)</span><i></i><span style="left:696px">Struttura territoriale privata autorizzata</span></div>
<svg class="arw" style="top:711.2px" width="11" height="10" viewBox="0 0 11 10"><path d="M.6 2.800H4.800V.7L10.200 4.900L4.800 9.100V7H.6Z" fill="#eaf0fb" stroke="#446fa6" stroke-width="1.100" stroke-linejoin="round"/></svg>
<div class="gr" style="top:728px"><span style="left:2px">Turri Paolo (paolo.turri2319)</span><i></i><span style="left:696px">Struttura territoriale privata accreditata</span></div>
<svg class="arw" style="top:731.2px" width="11" height="10" viewBox="0 0 11 10"><path d="M.6 2.800H4.800V.7L10.200 4.900L4.800 9.100V7H.6Z" fill="#eaf0fb" stroke="#446fa6" stroke-width="1.100" stroke-linejoin="round"/></svg>
<div class="gr" style="top:748px"><span style="left:2px">Turri Paolo (paolo.turri2319)</span><i></i><span style="left:696px">Altra Azienda (es. Azienda per l'Emergenza)</span></div>
<svg class="arw" style="top:751.2px" width="11" height="10" viewBox="0 0 11 10"><path d="M.6 2.800H4.800V.7L10.200 4.900L4.800 9.100V7H.6Z" fill="#eaf0fb" stroke="#446fa6" stroke-width="1.100" stroke-linejoin="round"/></svg>
<div class="gr" style="top:768px"><span style="left:2px">Turri Paolo (paolo.turri2319)</span><i></i><span style="left:696px">Farmacia</span></div>
<svg class="arw" style="top:771.2px" width="11" height="10" viewBox="0 0 11 10"><path d="M.6 2.800H4.800V.7L10.200 4.900L4.800 9.100V7H.6Z" fill="#eaf0fb" stroke="#446fa6" stroke-width="1.100" stroke-linejoin="round"/></svg>
<div class="gr" style="top:788px"><span style="left:2px">Turri Paolo (paolo.turri2319)</span><i></i><span style="left:696px">Comune</span></div>
<svg class="arw" style="top:791.2px" width="11" height="10" viewBox="0 0 11 10"><path d="M.6 2.800H4.800V.7L10.200 4.900L4.800 9.100V7H.6Z" fill="#eaf0fb" stroke="#446fa6" stroke-width="1.100" stroke-linejoin="round"/></svg>
<div class="gr" style="top:808px"><span style="left:2px">Turri Paolo (paolo.turri2319)</span><i></i><span style="left:696px">IPAB</span></div>
<svg class="arw" style="top:811.2px" width="11" height="10" viewBox="0 0 11 10"><path d="M.6 2.800H4.800V.7L10.200 4.900L4.800 9.100V7H.6Z" fill="#eaf0fb" stroke="#446fa6" stroke-width="1.100" stroke-linejoin="round"/></svg>
<div class="gr" style="top:828px"><span style="left:2px">Turri Paolo (paolo.turri2319)</span><i></i><span style="left:696px">ALTRO</span></div>
<svg class="arw" style="top:831.2px" width="11" height="10" viewBox="0 0 11 10"><path d="M.6 2.800H4.800V.7L10.200 4.900L4.800 9.100V7H.6Z" fill="#eaf0fb" stroke="#446fa6" stroke-width="1.100" stroke-linejoin="round"/></svg>
<div class="gr" style="top:848px"><span style="left:2px">Boaretto Diletta (diletta.boaretto6772)</span><i></i><span style="left:696px">ASL</span></div>
<svg class="arw" style="top:851.2px" width="11" height="10" viewBox="0 0 11 10"><path d="M.6 2.800H4.800V.7L10.200 4.900L4.800 9.100V7H.6Z" fill="#eaf0fb" stroke="#446fa6" stroke-width="1.100" stroke-linejoin="round"/></svg>
<div class="abs" style="left:1595px;top:428px;width:15px;height:440px;background:#f1f1f1"></div>
<div class="abs" style="left:1597px;top:443px;width:11px;height:144px;background:#c1c1c1"></div>
<svg class="abs" style="left:1598px;top:433px" width="8" height="5" viewBox="0 0 8 5"><path d="M0 4.500L4 .5L8 4.500Z" fill="#a3a3a3"/></svg>
<svg class="abs" style="left:1598px;top:858px" width="8" height="5" viewBox="0 0 8 5"><path d="M0 .5L4 4.500L8 .5Z" fill="#505050"/></svg>
</div></body></html>
